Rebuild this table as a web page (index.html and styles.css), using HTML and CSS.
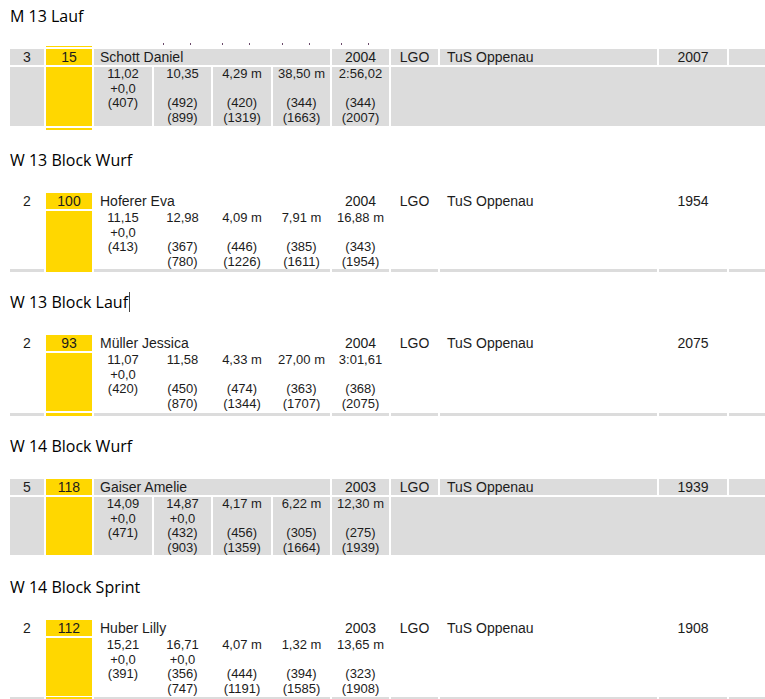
FILE: index.html
```html
<!DOCTYPE html>
<html lang="de">
<head>
<meta charset="utf-8">
<title>Ergebnisse</title>
<link rel="stylesheet" href="styles.css">
</head>
<body>

<section class="sec">
  <h2 class="title">M 13 Lauf</h2>
  <div class="tbl shade has-top">
    <div class="row top">
      <i></i><i class="bib"></i><i></i>
      <i class="tick"><b></b></i><i class="tick"><b></b></i><i class="tick"><b></b></i><i class="tick"><b></b></i>
    </div>
    <div class="row r1">
      <span class="rank">3</span><span class="bib">15</span><span class="name">Schott Daniel</span><span class="year">2004</span><span class="lgo">LGO</span><span class="club">TuS Oppenau</span><span class="pts">2007</span><span></span>
    </div>
    <div class="row r2 h59">
      <span></span><span class="bib"></span>
      <span class="disc">11,02<br>+0,0<br>(407)</span>
      <span class="disc">10,35<br>&nbsp;<br>(492)<br>(899)</span>
      <span class="disc">4,29 m<br>&nbsp;<br>(420)<br>(1319)</span>
      <span class="disc">38,50 m<br>&nbsp;<br>(344)<br>(1663)</span>
      <span class="disc">2:56,02<br>&nbsp;<br>(344)<br>(2007)</span>
      <span class="rest"></span>
    </div>
    <div class="row tail thin">
      <i></i><i class="bib"></i>
    </div>
  </div>
</section>

<section class="sec">
  <h2 class="title">W 13 Block Wurf</h2>
  <div class="tbl">
    <div class="row r1">
      <span class="rank">2</span><span class="bib">100</span><span class="name">Hoferer Eva</span><span class="year">2004</span><span class="lgo">LGO</span><span class="club">TuS Oppenau</span><span class="pts">1954</span><span></span>
    </div>
    <div class="row r2 h56">
      <span></span><span class="bib"></span>
      <span class="disc">11,15<br>+0,0<br>(413)</span>
      <span class="disc">12,98<br>&nbsp;<br>(367)<br>(780)</span>
      <span class="disc">4,09 m<br>&nbsp;<br>(446)<br>(1226)</span>
      <span class="disc">7,91 m<br>&nbsp;<br>(385)<br>(1611)</span>
      <span class="disc">16,88 m<br>&nbsp;<br>(343)<br>(1954)</span>
      <span class="rest"></span>
    </div>
    <div class="row tail gray">
      <i></i><i class="bib"></i><i class="name"></i><i></i><i></i><i></i><i></i><i></i>
    </div>
  </div>
</section>

<section class="sec">
  <h2 class="title">W 13 Block Lauf<span class="caret"></span></h2>
  <div class="tbl">
    <div class="row r1">
      <span class="rank">2</span><span class="bib">93</span><span class="name">Müller Jessica</span><span class="year">2004</span><span class="lgo">LGO</span><span class="club">TuS Oppenau</span><span class="pts">2075</span><span></span>
    </div>
    <div class="row r2 h58">
      <span></span><span class="bib"></span>
      <span class="disc">11,07<br>+0,0<br>(420)</span>
      <span class="disc">11,58<br>&nbsp;<br>(450)<br>(870)</span>
      <span class="disc">4,33 m<br>&nbsp;<br>(474)<br>(1344)</span>
      <span class="disc">27,00 m<br>&nbsp;<br>(363)<br>(1707)</span>
      <span class="disc">3:01,61<br>&nbsp;<br>(368)<br>(2075)</span>
      <span class="rest"></span>
    </div>
    <div class="row tail gray">
      <i></i><i class="bib"></i><i class="name"></i><i></i><i></i><i></i><i></i><i></i>
    </div>
  </div>
</section>

<section class="sec">
  <h2 class="title">W 14 Block Wurf</h2>
  <div class="tbl shade">
    <div class="row r1">
      <span class="rank">5</span><span class="bib">118</span><span class="name">Gaiser Amelie</span><span class="year">2003</span><span class="lgo">LGO</span><span class="club">TuS Oppenau</span><span class="pts">1939</span><span></span>
    </div>
    <div class="row r2 h58">
      <span></span><span class="bib"></span>
      <span class="disc">14,09<br>+0,0<br>(471)</span>
      <span class="disc">14,87<br>+0,0<br>(432)<br>(903)</span>
      <span class="disc">4,17 m<br>&nbsp;<br>(456)<br>(1359)</span>
      <span class="disc">6,22 m<br>&nbsp;<br>(305)<br>(1664)</span>
      <span class="disc">12,30 m<br>&nbsp;<br>(275)<br>(1939)</span>
      <span class="rest"></span>
    </div>
    <div class="row tail none"></div>
  </div>
</section>

<section class="sec">
  <h2 class="title">W 14 Block Sprint</h2>
  <div class="tbl">
    <div class="row r1">
      <span class="rank">2</span><span class="bib">112</span><span class="name">Huber Lilly</span><span class="year">2003</span><span class="lgo">LGO</span><span class="club">TuS Oppenau</span><span class="pts">1908</span><span></span>
    </div>
    <div class="row r2 h57">
      <span></span><span class="bib"></span>
      <span class="disc">15,21<br>+0,0<br>(391)</span>
      <span class="disc">16,71<br>+0,0<br>(356)<br>(747)</span>
      <span class="disc">4,07 m<br>&nbsp;<br>(444)<br>(1191)</span>
      <span class="disc">1,32 m<br>&nbsp;<br>(394)<br>(1585)</span>
      <span class="disc">13,65 m<br>&nbsp;<br>(323)<br>(1908)</span>
      <span class="rest"></span>
    </div>
    <div class="row tail gray">
      <i></i><i class="bib"></i><i class="name"></i><i></i><i></i><i></i><i></i><i></i>
    </div>
  </div>
</section>

</body>
</html>
```

FILE: styles.css
```css
:root {
  --gray: #dcdcdc;
  --yellow: #ffd700;
  --cols: 34px 46px 58px 57px 58px 57px 57px 47px 217px 68px 1fr;
}

html, body {
  overflow: hidden;
}

body {
  margin: 0;
  padding: 6px 0 0 10px;
  background: #ffffff;
  font-family: "Liberation Sans", Arial, sans-serif;
  font-size: 14px;
  color: #1c1c1c;
}

.sec + .sec {
  margin-top: 20px;
}

.title {
  margin: 0;
  height: 20px;
  font-family: "Open Sans", "Noto Sans", sans-serif;
  font-size: 16px;
  line-height: 20px;
  font-weight: 400;
  color: #000000;
  white-space: nowrap;
}

.caret {
  display: inline-block;
  width: 0;
  height: 20px;
  margin-left: 1px;
  border-left: 1px solid #444444;
  vertical-align: top;
}

.tbl {
  display: flex;
  flex-direction: column;
  row-gap: 2px;
  margin-top: 23px;
}

.tbl.has-top {
  margin-top: 20px;
}

.row {
  display: grid;
  grid-template-columns: var(--cols);
  column-gap: 2px;
}

.row > * {
  display: block;
  font-style: normal;
  white-space: nowrap;
}

.top {
  height: 1px;
}

.tick {
  position: relative;
}

.tick b {
  position: absolute;
  left: 50%;
  top: -3px;
  width: 28px;
  height: 2px;
  margin-left: -20px;
  border-left: 1px solid #6a4a6a;
  border-right: 1px solid #6a4a6a;
  box-sizing: border-box;
}

.r1 {
  height: 16px;
  line-height: 16px;
}

.r2 {
  font-size: 13px;
  line-height: 14.6px;
}

.h56 { height: 56px; }
.h57 { height: 57px; }
.h58 { height: 58px; }
.h59 { height: 59px; }

.tail {
  height: 3px;
}

.tail.thin {
  height: 2px;
}

.tail.none {
  height: 0;
}

.shade .r1 > *,
.shade .r2 > *,
.tail.gray > * {
  background: var(--gray);
}

.row > .bib,
.shade .row > .bib {
  background: var(--yellow);
}

.rank,
.bib,
.year,
.lgo,
.pts {
  text-align: center;
}

.name {
  grid-column: span 4;
  padding-left: 6px;
}

.club {
  padding-left: 7px;
}

.disc {
  text-align: center;
}

.rest {
  grid-column: span 4;
}
```
